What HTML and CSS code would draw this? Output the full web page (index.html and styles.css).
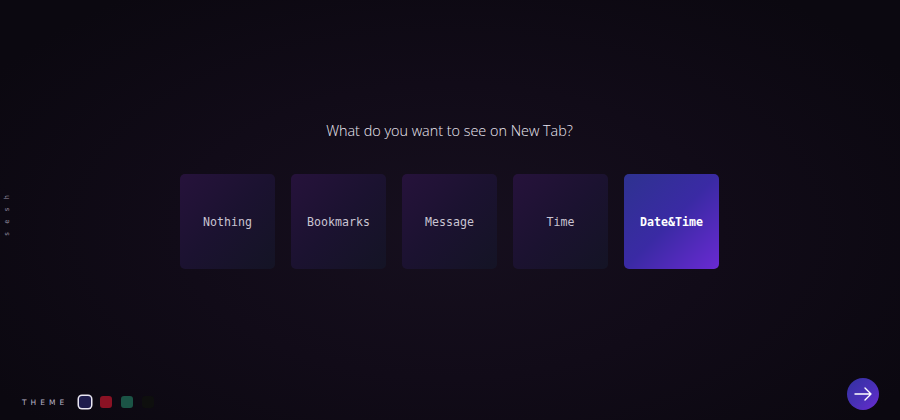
FILE: index.html
```html
<!DOCTYPE html>
<html>
<head>
<meta charset="utf-8">
<link rel="stylesheet" href="styles.css">
</head>
<body>
<div class="page">
  <div class="brand">sesh</div>
  <main class="center">
    <h1 class="title">What do you want to see on New Tab?</h1>
    <div class="cards">
      <div class="card">Nothing</div>
      <div class="card">Bookmarks</div>
      <div class="card">Message</div>
      <div class="card">Time</div>
      <div class="card active">Date&amp;Time</div>
    </div>
  </main>
  <div class="theme">
    <span class="theme-label">THEME</span>
    <span class="swatch navy selected"></span>
    <span class="swatch red"></span>
    <span class="swatch green"></span>
    <span class="swatch black"></span>
  </div>
  <button class="next" aria-label="Next">
    <svg width="18" height="14" viewBox="0 0 18 14" fill="none" stroke="#fff" stroke-width="1.4" stroke-linecap="round" stroke-linejoin="round">
      <path d="M1 7H17M11 1L17 7L11 13"/>
    </svg>
  </button>
</div>
</body>
</html>
```
FILE: styles.css
```css
html, body {
  margin: 0;
  padding: 0;
  width: 900px;
  height: 420px;
  overflow: hidden;
}
body {
  background: #0c0812;
  font-family: "Open Sans", "Noto Sans", sans-serif;
}
.page {
  position: relative;
  width: 900px;
  height: 420px;
  background: radial-gradient(ellipse 60% 70% at 50% 55%, #160f1e 0%, #110b18 50%, #0b0810 100%);
}
.brand {
  position: absolute;
  left: -18px;
  top: 215px;
  width: 50px;
  transform: rotate(-90deg);
  transform-origin: center;
  font-family: "DejaVu Sans Mono", monospace;
  font-size: 7px;
  letter-spacing: 8px;
  text-indent: 8px;
  color: #9a94a6;
  text-align: center;
}
.center {
  display: flex;
  flex-direction: column;
  align-items: center;
  padding-top: 120px;
  padding-right: 1px;
}
.title {
  margin: 0 0 32px 0;
  font-weight: 300;
  font-size: 14.4px;
  line-height: 22px;
  font-family: "Open Sans", sans-serif;
  color: #ece8f2;
}
.cards {
  display: flex;
  gap: 16px;
}
.card {
  width: 95px;
  height: 95px;
  border-radius: 5px;
  background: linear-gradient(135deg, #26123b 0%, #1b1230 50%, #141425 100%);
  display: flex;
  align-items: center;
  justify-content: center;
  font-family: "DejaVu Sans Mono", monospace;
  font-size: 11.6px;
  color: #c9c4d2;
}
.card.active {
  background: linear-gradient(135deg, #2e3290 0%, #3a2aa4 50%, #6a2ad2 100%);
  color: #ffffff;
  font-weight: bold;
}
.theme {
  position: absolute;
  left: 22px;
  bottom: 12px;
  display: flex;
  align-items: center;
  gap: 9px;
}
.theme-label {
  width: 48px;
  font-family: "DejaVu Sans", sans-serif;
  font-size: 7.5px;
  letter-spacing: 4px;
  color: #b8b2c6;
}
.swatch {
  width: 12px;
  height: 12px;
  border-radius: 3px;
  display: inline-block;
}
.swatch.selected {
  box-shadow: 0 0 0 1.5px #e9e6f2;
}
.navy { background: #1e1c4c; }
.red { background: #8a1224; }
.green { background: #1b5446; }
.black { background: #0e0f0e; }
.next {
  position: absolute;
  right: 21px;
  bottom: 10px;
  width: 32px;
  height: 32px;
  border: none;
  border-radius: 50%;
  padding: 0;
  background: linear-gradient(135deg, #3331a0 0%, #4a30b8 55%, #6a2ad0 100%);
  display: flex;
  align-items: center;
  justify-content: center;
}
```
